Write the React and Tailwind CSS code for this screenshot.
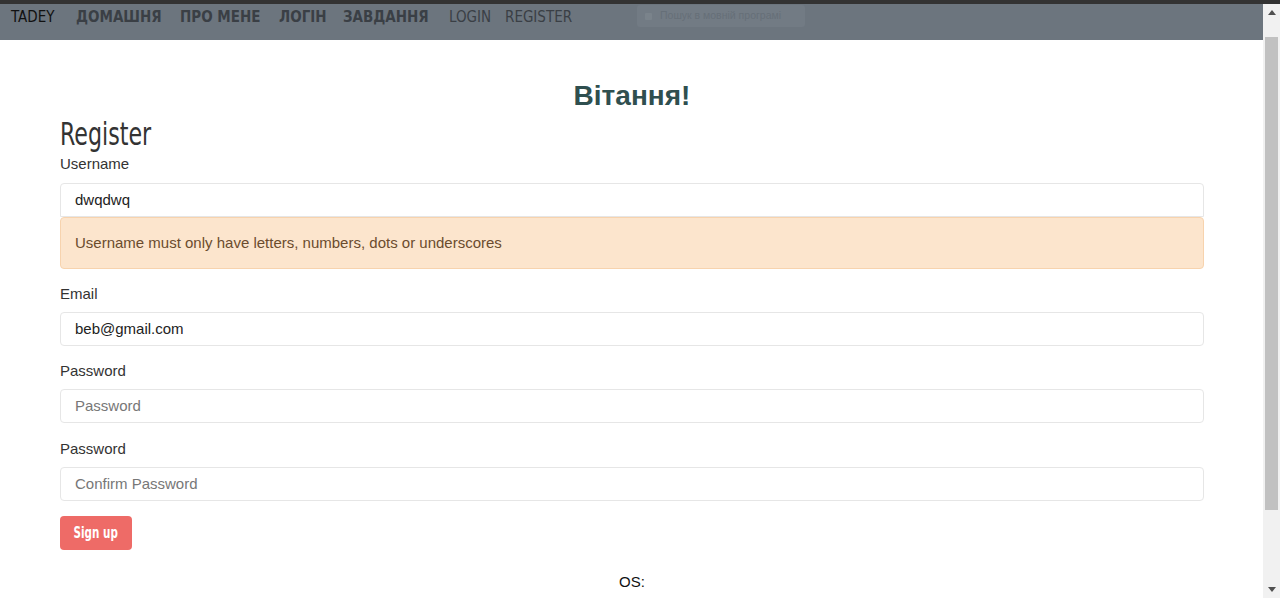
import React from "react";

const narrow = { fontFamily: '"DejaVu Sans Condensed", "Liberation Sans", sans-serif' };

function Field({ label, value, placeholder, extra = "" }) {
  return (
    <div className={`flex flex-col ${extra}`}>
      <label className="text-[15px] leading-[20px] text-[#333] mb-[8px]">{label}</label>
      <div className="h-[34px] w-full rounded-[4px] border border-[#e6e6e6] bg-white px-[14px] flex items-center text-[15px]">
        {value ? <span className="text-[#222]">{value}</span> : <span className="text-[#777]">{placeholder}</span>}
      </div>
    </div>
  );
}

function NavItem({ w, bold, dark, children }) {
  return (
    <span className={`${w} shrink-0 whitespace-nowrap ${bold ? "font-bold" : ""} ${dark ? "text-[#111]" : "text-[#3a3f45]"}`}>{children}</span>
  );
}

export default function App() {
  return (
    <div className="w-[1280px] h-[598px] overflow-hidden bg-white flex flex-col" style={{ fontFamily: '"Liberation Sans", Arial, sans-serif' }}>
      <div className="h-[4px] bg-[#333333] shrink-0" />
      <div className="flex flex-1 min-h-0">
        <div className="flex-1 flex flex-col min-w-0">
          <nav className="h-[36px] bg-[#6c757e] flex items-center pl-[11px] shrink-0">
            <div className="flex items-center text-[15px] -mt-[10px]" style={narrow}>
              <NavItem w="w-[65px]" dark>TADEY</NavItem>
              <NavItem w="w-[104px]" bold>ДОМАШНЯ</NavItem>
              <NavItem w="w-[99px]" bold>ПРО МЕНЕ</NavItem>
              <NavItem w="w-[64px]" bold>ЛОГІН</NavItem>
              <NavItem w="w-[106px]" bold>ЗАВДАННЯ</NavItem>
              <NavItem w="w-[56px]">LOGIN</NavItem>
              <NavItem w="w-[70px]">REGISTER</NavItem>
            </div>
            <div className="ml-[62px] -mt-[12px] h-[22px] w-[168px] rounded-[3px] bg-[#727b84] flex items-center pl-[8px] gap-[8px]">
              <span className="w-[7px] h-[7px] bg-[#7a838b] rounded-[1px] shrink-0" />
              <span className="text-[10.5px] text-[#666f78] whitespace-nowrap">Пошук в мовній програмі</span>
            </div>
          </nav>
          <main className="flex flex-col">
            <h1 className="text-center text-[28px] font-bold text-[#2f4f4f] mt-[39px] leading-[34px] pl-[1px]">Вітання!</h1>
            <div className="ml-[60px] w-[1144px] flex flex-col">
              <h2 className="text-[32px] leading-[36px] text-[#333] mt-[3px]" style={narrow}>
                <span className="inline-block origin-left scale-x-[0.77]">Register</span>
              </h2>
              <div className="mt-[2px] flex flex-col">
                <label className="text-[15px] leading-[20px] text-[#333] mb-[9px]">Username</label>
                <div className="h-[34px] w-full rounded-t-[4px] border border-[#e6e6e6] bg-white px-[14px] flex items-center text-[15px] text-[#222]">dwqdwq</div>
                <div className="h-[52px] w-full rounded-[4px] bg-[#fce5cd] border border-[#f7d3ae] px-[14px] flex items-center text-[15px] text-[#6b4c2e]">
                  Username must only have letters, numbers, dots or underscores
                </div>
              </div>
              <div className="mt-[15px] flex flex-col gap-[15px]">
                <Field label="Email" value="beb@gmail.com" />
                <Field label="Password" placeholder="Password" />
                <Field label="Password" placeholder="Confirm Password" extra="mt-[1px]" />
              </div>
              <div className="mt-[15px]">
                <button className="h-[34px] w-[72px] rounded-[4px] bg-[#ee6b67] text-white text-[16px] font-bold flex items-center justify-center" style={narrow}>
                  <span className="inline-block whitespace-nowrap scale-x-[0.72]">Sign up</span>
                </button>
              </div>
            </div>
            <div className="text-center text-[15px] text-[#111] mt-[21px] pl-[1px]">OS:</div>
          </main>
        </div>
        <div className="w-[17px] bg-[#f1f1f1] flex flex-col items-center shrink-0">
          <div className="h-[17px] w-full flex items-center justify-center">
            <svg width="8" height="5" viewBox="0 0 8 5"><path d="M0 5 L4 0 L8 5 Z" fill="#505050" /></svg>
          </div>
          <div className="mt-[16px] h-[473px] w-[13px] bg-[#c1c1c1]" />
          <div className="flex-1" />
          <div className="h-[17px] w-full flex items-center justify-center">
            <svg width="8" height="5" viewBox="0 0 8 5"><path d="M0 0 L8 0 L4 5 Z" fill="#505050" /></svg>
          </div>
        </div>
      </div>
    </div>
  );
}
